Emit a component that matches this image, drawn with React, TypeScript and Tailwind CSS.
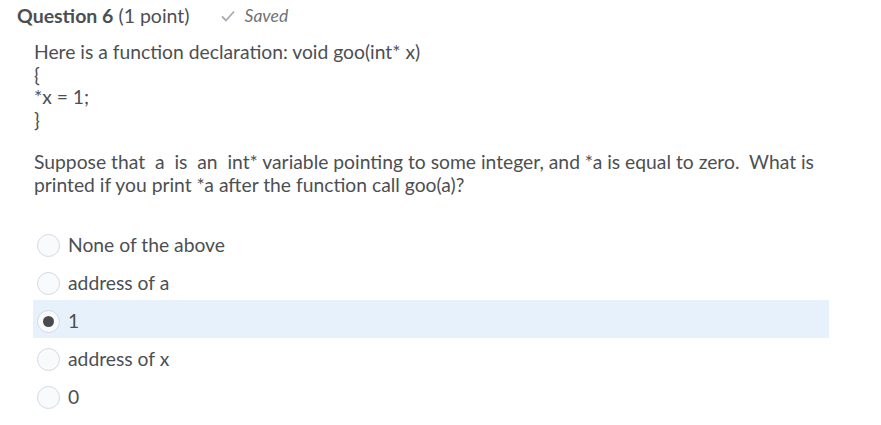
import React from "react";

const options = [
  { label: "None of the above", checked: false },
  { label: "address of a", checked: false },
  { label: "1", checked: true },
  { label: "address of x", checked: false },
  { label: "0", checked: false },
];

function Radio({ checked }: { checked: boolean }) {
  return (
    <span className="flex h-[23px] w-[23px] shrink-0 items-center justify-center rounded-full border border-[#d3d9e3] bg-[#f9fafb]">
      {checked && <span className="h-[11px] w-[11px] rounded-full bg-[#494c4e]" />}
    </span>
  );
}

export default function App() {
  return (
    <div className="h-[425px] w-[881px] bg-white text-[#4c4f52]" style={{ fontFamily: "Lato, 'Open Sans', sans-serif" }}>
      {/* header */}
      <div className="flex items-center pl-[17px] pt-[3px] h-[29px]">
        <span className="text-[19.5px] font-bold">Question 6</span>
        <span className="ml-[5px] text-[19.5px]">(1 point)</span>
        <span className="ml-[31px] flex items-center gap-[10px] text-[17.5px] italic text-[#6e7376]">
          <svg width="14" height="12" viewBox="0 0 14 12" fill="none">
            <path d="M1 6.5l4 4L13 1.5" stroke="#a6acb3" strokeWidth="1.8" />
          </svg>
          Saved
        </span>
      </div>

      {/* question body */}
      <div className="pl-[34px] pt-[12px] text-[19.3px] leading-[22.7px]">
        <p>Here is a function declaration: void goo(int* x)</p>
        <p>{"{"}</p>
        <p>*x = 1;</p>
        <p>{"}"}</p>
        <p className="mt-[19px] pr-[50px]">
          Suppose that &nbsp;a &nbsp;is &nbsp;an &nbsp;int* variable pointing to some integer, and *a is equal to zero.&nbsp; What is printed if you print *a after the function call goo(a)?
        </p>
      </div>

      {/* options */}
      <div className="mt-[28px] pl-[33px] pr-[52px]">
        {options.map((o) => (
          <div
            key={o.label}
            className={`flex h-[38px] items-center gap-[8px] pl-[4px] pt-[4px] text-[19.3px] ${o.checked ? "bg-[#e6f1fb]" : ""}`}
          >
            <Radio checked={o.checked} />
            <span>{o.label}</span>
          </div>
        ))}
      </div>
    </div>
  );
}
